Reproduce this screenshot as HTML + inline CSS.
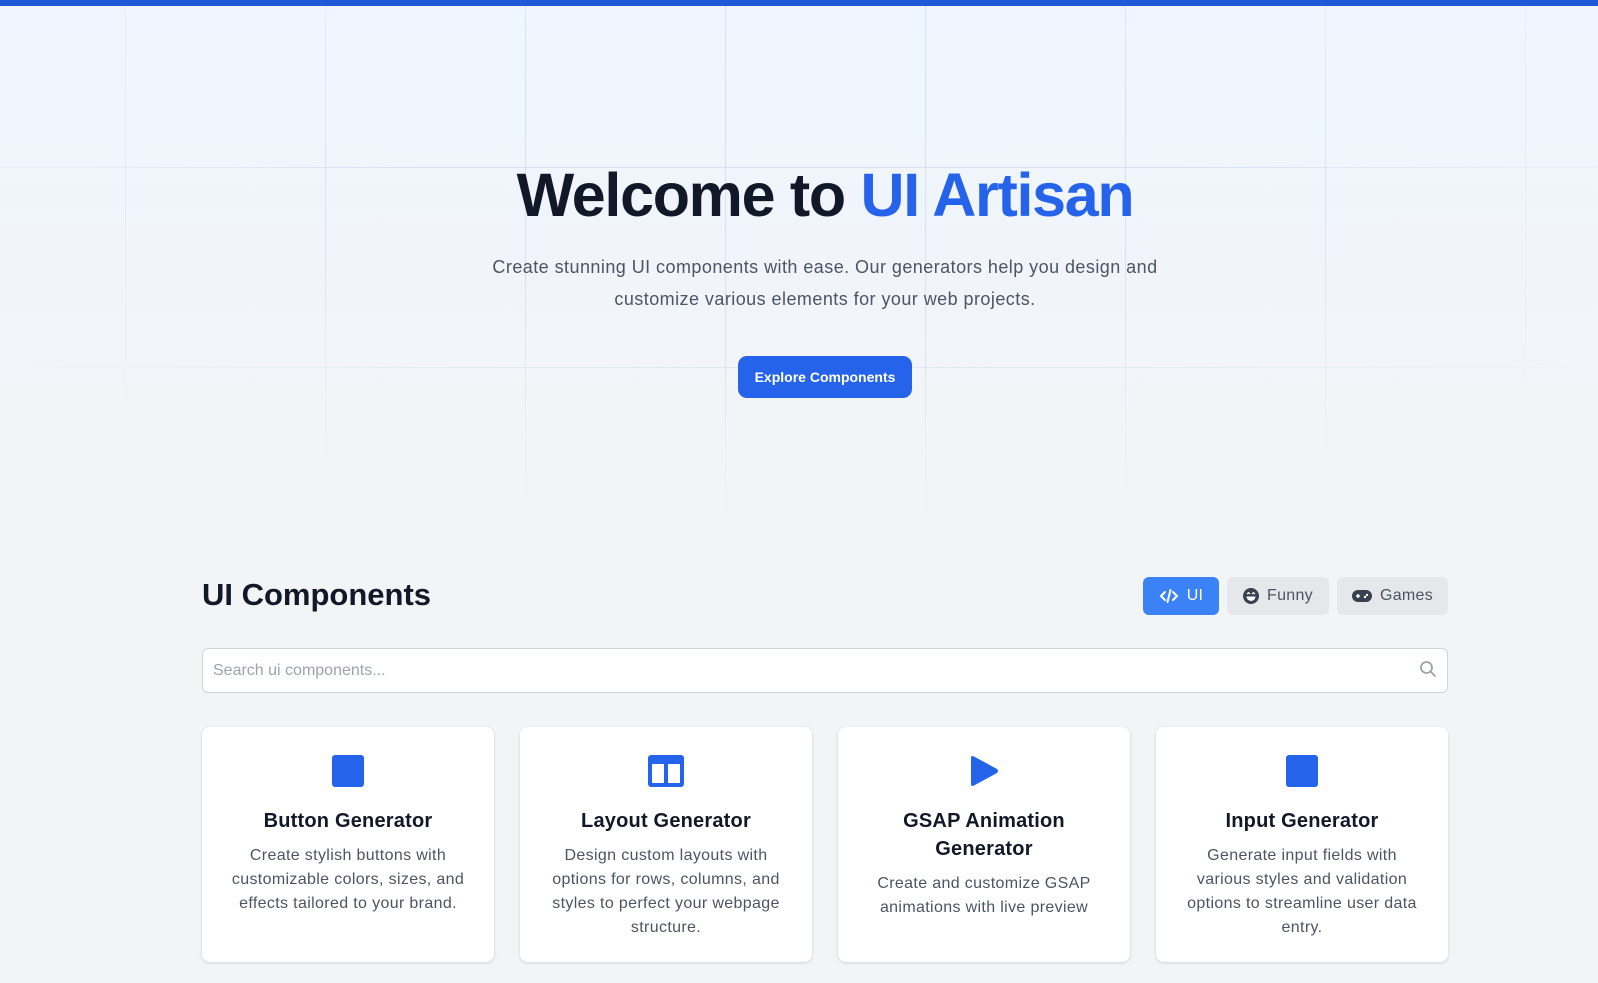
<!DOCTYPE html>
<html><head><meta charset="utf-8"><style>
*{box-sizing:border-box;margin:0;padding:0}
body{width:1598px;height:983px;overflow:hidden;background:#f3f4f6;font-family:"Liberation Sans",sans-serif;position:relative}
.bar{position:absolute;top:0;left:0;width:100%;height:6px;background:#2158d8}
.hero{position:absolute;top:6px;left:0;width:100%;height:524px;background:linear-gradient(#eff6ff,#f3f4f6)}
.grid{position:absolute;inset:0;background-image:linear-gradient(90deg,rgba(191,210,240,.55) 1px,transparent 1px),linear-gradient(rgba(191,210,240,.55) 1px,transparent 1px);background-size:200px 200px;background-position:125px 161px;-webkit-mask-image:radial-gradient(ellipse 60% 70% at 50% 30%,#000 40%,transparent 100%);mask-image:radial-gradient(ellipse 60% 70% at 50% 30%,#000 40%,transparent 100%)}
h1{position:absolute;top:160px;left:26px;width:100%;text-align:center;font-size:61px;font-weight:700;color:#111827;letter-spacing:-1.3px}
h1 span{color:#2563eb}
.sub{position:absolute;top:251px;left:26px;width:100%;text-align:center;font-size:18px;line-height:32px;color:#4b5563;letter-spacing:.45px}
.btn{position:absolute;top:356px;left:738px;width:174px;height:42px;background:#2563eb;color:#fff;border-radius:9px;font-size:14px;font-weight:700;display:flex;align-items:center;justify-content:center}
h2{position:absolute;top:577px;left:202px;font-size:31px;font-weight:700;color:#111827}
.tab{position:absolute;top:577px;height:38px;border-radius:6px;background:#e5e7eb;color:#4b5563;font-size:16px;display:flex;align-items:center;justify-content:center;gap:8px;letter-spacing:.3px}
.search{position:absolute;top:648px;left:202px;width:1246px;height:45px;background:#fff;border:1px solid #d1d5db;border-radius:6px;font-size:16px;color:#9ca3af;padding-left:10px;line-height:43px}
.card{position:absolute;top:727px;width:292px;height:235px;background:#fff;border-radius:8px;box-shadow:0 1px 3px rgba(0,0,0,.15);text-align:center}
.ic{position:absolute;top:28px;left:130px;width:32px;height:32px}
.card h3{position:absolute;top:80px;left:10px;right:10px;font-size:20px;font-weight:700;color:#111827;line-height:28px;letter-spacing:.2px}
.card p{position:absolute;left:26px;right:26px;font-size:16px;line-height:24px;color:#4b5563;letter-spacing:.35px}
</style></head><body>
<div class="bar"></div>
<div class="hero"><div class="grid"></div></div>
<h1>Welcome to <span>UI Artisan</span></h1>
<div class="sub">Create stunning UI components with ease. Our generators help you design and<br>customize various elements for your web projects.</div>
<div class="btn">Explore Components</div>
<h2>UI Components</h2>
<div class="tab" style="left:1143px;width:76px;background:#3b82f6;color:#fff"><svg width="20" height="16" viewBox="0 0 20 16" fill="none" stroke="#fff" stroke-width="2" stroke-linecap="round"><path d="M6 4L2 8l4 4M14 4l4 4-4 4M11.5 2l-3 12"/></svg>UI</div>
<div class="tab" style="left:1227px;width:102px"><svg width="16" height="16" viewBox="0 0 16 16"><circle cx="8" cy="8" r="8" fill="#374151"/><path d="M3.5 8.5h9a4.5 4.5 0 0 1-9 0z" fill="#fff"/><path d="M4 6l1.5-1.3L7 6M9 6l1.5-1.3L12 6" stroke="#fff" stroke-width="1.2" fill="none"/></svg>Funny</div>
<div class="tab" style="left:1337px;width:111px"><svg width="20" height="14" viewBox="0 0 20 14"><rect x="0" y="1" width="20" height="12" rx="6" fill="#374151"/><path d="M4 7h4M6 5v4" stroke="#fff" stroke-width="1.5"/><circle cx="13" cy="8" r="1.2" fill="#fff"/><circle cx="15" cy="6" r="1.2" fill="#fff"/></svg>Games</div>
<div class="search">Search ui components...<svg style="position:absolute;right:10px;top:11px" width="18" height="18" viewBox="0 0 18 18" fill="none" stroke="#9ca3af" stroke-width="1.8"><circle cx="7.5" cy="7.5" r="5.5"/><path d="M11.5 11.5L16 16" stroke-linecap="round"/></svg></div>

<div class="card" style="left:202px"><svg class="ic" viewBox="0 0 32 32"><rect x="0" y="0" width="32" height="32" rx="3" fill="#2563eb"/></svg><h3>Button Generator</h3><p style="top:117px">Create stylish buttons with customizable colors, sizes, and effects tailored to your brand.</p></div>
<div class="card" style="left:520px"><svg class="ic" viewBox="0 0 36 32" style="left:128px;width:36px"><rect x="0" y="0" width="36" height="32" rx="3" fill="#2563eb"/><rect x="4" y="9" width="12" height="19" fill="#fff"/><rect x="20" y="9" width="12" height="19" fill="#fff"/></svg><h3>Layout Generator</h3><p style="top:117px">Design custom layouts with options for rows, columns, and styles to perfect your webpage structure.</p></div>
<div class="card" style="left:838px"><svg class="ic" viewBox="0 0 32 32"><path d="M3 3Q3 0 6 1.5L29 14Q31 16 29 18L6 30.5Q3 32 3 29z" fill="#2563eb"/></svg><h3 style="left:40px;right:40px">GSAP Animation Generator</h3><p style="top:145px">Create and customize GSAP animations with live preview</p></div>
<div class="card" style="left:1156px"><svg class="ic" viewBox="0 0 32 32"><rect x="0" y="0" width="32" height="32" rx="3" fill="#2563eb"/></svg><h3>Input Generator</h3><p style="top:117px">Generate input fields with various styles and validation options to streamline user data entry.</p></div>
</body></html>
